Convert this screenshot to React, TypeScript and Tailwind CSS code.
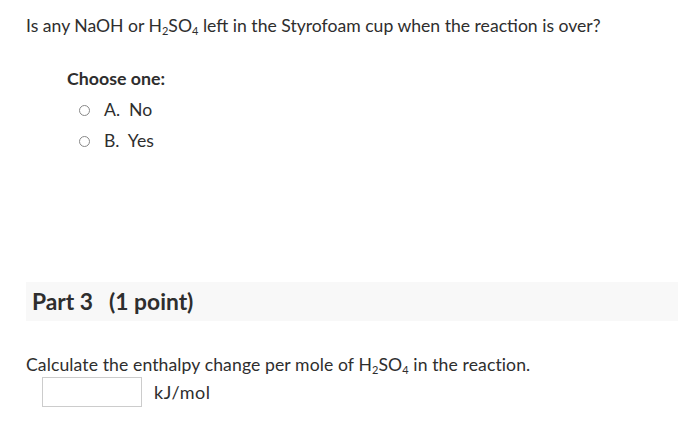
export default function App() {
  return (
    <div className="w-[678px] h-[440px] bg-white text-[#2e2e2e] font-['Lato',sans-serif] overflow-hidden">
      <p className="pl-[26px] pt-[14px] text-[17.6px] leading-[24px]">
        Is any NaOH or H<sub className="text-[11px]">2</sub>SO<sub className="text-[11px]">4</sub> left in the
        Styrofoam cup when the reaction is over?
      </p>

      <div className="pl-[67px] mt-[28px]">
        <div className="font-bold text-[17.8px] leading-[24px]">Choose one:</div>
        <div className="mt-[8px] flex flex-col gap-[7px] pl-[12px]">
          {['A. No', 'B. Yes'].map((label) => (
            <label key={label} className="flex items-center gap-[14px] text-[17.6px] leading-[24px]">
              <span className="w-[11px] h-[11px] rounded-full border border-[#888] bg-white" />
              <span>{label.slice(0, 2)}&nbsp;&nbsp;{label.slice(3)}</span>
            </label>
          ))}
        </div>
      </div>

      <div className="ml-[26px] mt-[129px] h-[39px] bg-[#f8f8f8] flex items-center pl-[6px]">
        <span className="font-bold text-[22.8px]">Part 3</span>
        <span className="font-bold text-[22.8px] ml-[16px]">(1 point)</span>
      </div>

      <p className="pl-[26px] mt-[32px] text-[17.6px] leading-[24px] tracking-[0.1px]">
        Calculate the enthalpy change per mole of H<sub className="text-[11px]">2</sub>SO<sub className="text-[11px]">4</sub> in
        the reaction.
      </p>
      <div className="pl-[42px] flex items-center gap-[12px]">
        <input className="w-[100px] h-[30px] border border-[#ccc] bg-white" />
        <span className="text-[18px] tracking-[0.5px]">kJ/mol</span>
      </div>
    </div>
  );
}
